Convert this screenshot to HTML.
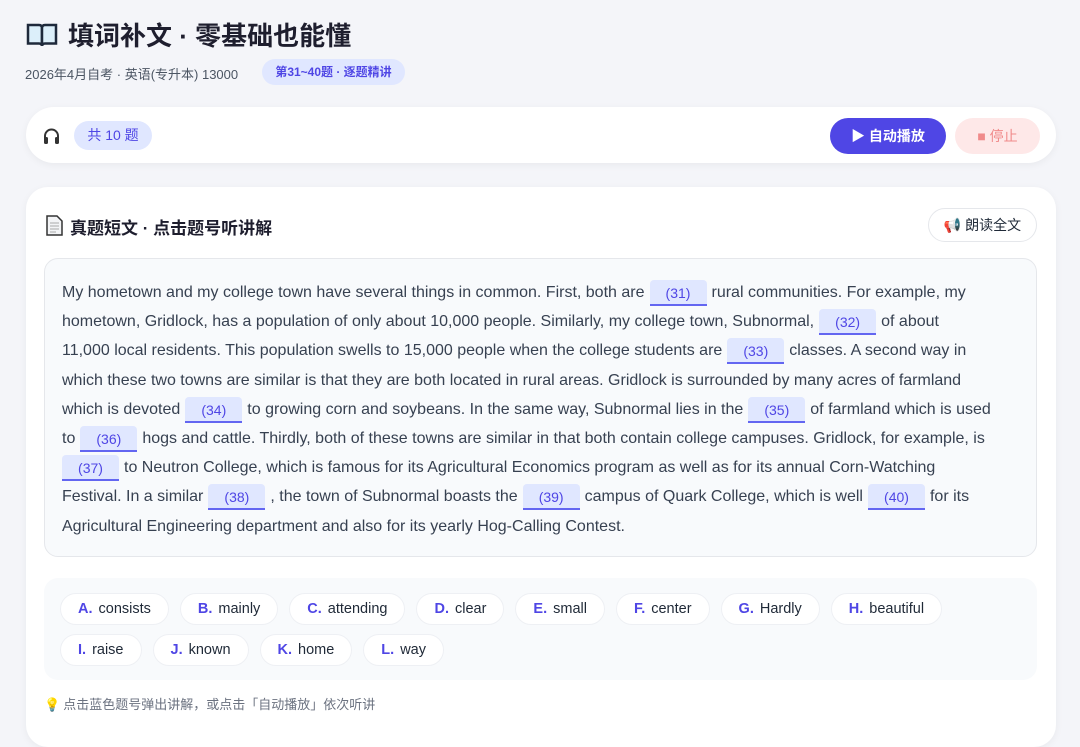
<!DOCTYPE html>
<html><head><meta charset="utf-8"><style>
*{box-sizing:border-box;margin:0;padding:0}
body{width:1080px;height:719px;overflow:hidden;background:#f4f5f9;font-family:"Liberation Sans","Noto Sans CJK SC",sans-serif;color:#1f2937;position:relative}
.abs{position:absolute}
h1{position:absolute;left:68px;top:16px;font-size:26px;font-weight:700;color:#1e1e2e;letter-spacing:0}
.sub{left:25px;top:64px;font-size:13px;color:#4b5563}
.pill{left:262px;top:59px;width:143px;height:26px;border-radius:13px;background:#e0e7ff;color:#4f46e5;font-size:12px;font-weight:700;text-align:center;line-height:26px}
.card{background:#fff;border-radius:28px;box-shadow:0 2px 8px rgba(0,0,0,0.05)}
.cnt{left:74px;top:121px;width:78px;height:29px;border-radius:15px;background:#e0e7ff;color:#4f46e5;font-size:14px;text-align:center;line-height:29px}
.play{left:830px;top:118px;width:116px;height:36px;border-radius:18px;background:#4f46e5;color:#fff;font-size:14px;font-weight:700;text-align:center;line-height:36px}
.stop{left:955px;top:118px;width:85px;height:36px;border-radius:18px;background:#fee8e8;color:#f08a8a;font-size:14px;text-align:center;line-height:36px}
.h2{left:70px;top:214px;font-size:17px;font-weight:700;color:#1e1e2e}
.read{left:928px;top:208px;width:109px;height:34px;border-radius:17px;border:1px solid #e5e7eb;background:#fff;font-size:14px;text-align:center;line-height:32px;color:#1f2937}
.pass{left:44px;top:258px;width:993px;height:299px;background:#f8fafc;border:1px solid #e5e7eb;border-radius:14px;padding:19px 0 0 17px}
.ln{height:29.2px;line-height:29px;font-size:16px;color:#374151;white-space:nowrap}
.b{display:inline-block;width:57px;height:26px;line-height:26px;margin:0 5px;background:#e0e7ff;border-bottom:2px solid #6366f1;color:#4f46e5;font-size:14px;text-align:center;vertical-align:middle;border-radius:4px 4px 0 0}
.opts{left:44px;top:578px;width:993px;height:102px;background:#f8fafc;border-radius:14px;padding:15px 0 0 16px}
.row{height:41px;white-space:nowrap}
.ch{display:inline-block;height:32px;line-height:30px;padding:0 17px;border:1px solid #eef0f4;background:#fff;border-radius:16px;font-size:14.5px;margin-right:11px;color:#1f2937}
.ch b{color:#4f46e5;margin-right:6px}
.hint{left:44px;top:694px;font-size:13px;color:#6b7280}
</style></head><body>
<svg class="abs" style="left:26px;top:22px" width="32" height="26" viewBox="0 0 32 26"><path d="M2 3h11c2 0 3 1 3 3v18c0-1.5-1-2.5-3-2.5H2z" fill="#dceffa" stroke="#1e293b" stroke-width="2.5"/><path d="M30 3H19c-2 0-3 1-3 3v18c0-1.5 1-2.5 3-2.5h11z" fill="#dceffa" stroke="#1e293b" stroke-width="2.5"/></svg>
<h1>填词补文 · 零基础也能懂</h1>
<div class="abs sub">2026年4月自考 · 英语(专升本) 13000</div>
<div class="abs pill">第31~40题 · 逐题精讲</div>
<div class="abs card" style="left:26px;top:107px;width:1030px;height:56px"></div>
<svg class="abs" style="left:42px;top:127px" width="19" height="18" viewBox="0 0 19 18"><path d="M3 12V9a6.5 6.5 0 0 1 13 0v3" fill="none" stroke="#333" stroke-width="2"/><rect x="2" y="10" width="4" height="7" rx="1.5" fill="#333"/><rect x="13" y="10" width="4" height="7" rx="1.5" fill="#333"/></svg>
<div class="abs cnt">共 10 题</div>
<div class="abs play">▶ 自动播放</div>
<div class="abs stop">■ 停止</div>
<div class="abs card" style="left:26px;top:187px;width:1030px;height:560px;border-radius:22px"></div>
<svg class="abs" style="left:46px;top:215px" width="17" height="21" viewBox="0 0 17 21"><path d="M1 1h10l5 5v14H1z" fill="#f3f4f6" stroke="#333" stroke-width="1.5"/><path d="M4 8h9M4 11h9M4 14h9M4 17h6" stroke="#aaa"/></svg>
<div class="abs h2">真题短文 · 点击题号听讲解</div>
<div class="abs read"><span style="color:#c0392b">📢</span> 朗读全文</div>
<div class="abs pass">
<div class="ln">My hometown and my college town have several things in common. First, both are<span class="b">(31)</span>rural communities. For example, my</div>
<div class="ln">hometown, Gridlock, has a population of only about 10,000 people. Similarly, my college town, Subnormal,<span class="b">(32)</span>of about</div>
<div class="ln">11,000 local residents. This population swells to 15,000 people when the college students are<span class="b">(33)</span>classes. A second way in</div>
<div class="ln">which these two towns are similar is that they are both located in rural areas. Gridlock is surrounded by many acres of farmland</div>
<div class="ln">which is devoted<span class="b">(34)</span>to growing corn and soybeans. In the same way, Subnormal lies in the<span class="b">(35)</span>of farmland which is used</div>
<div class="ln">to<span class="b">(36)</span>hogs and cattle. Thirdly, both of these towns are similar in that both contain college campuses. Gridlock, for example, is</div>
<div class="ln"><span class="b" style="margin-left:0">(37)</span>to Neutron College, which is famous for its Agricultural Economics program as well as for its annual Corn-Watching</div>
<div class="ln">Festival. In a similar<span class="b">(38)</span>, the town of Subnormal boasts the<span class="b">(39)</span>campus of Quark College, which is well<span class="b">(40)</span>for its</div>
<div class="ln">Agricultural Engineering department and also for its yearly Hog-Calling Contest.</div>
</div>
<div class="abs opts">
<div class="row"><span class="ch"><b>A.</b>consists</span><span class="ch"><b>B.</b>mainly</span><span class="ch"><b>C.</b>attending</span><span class="ch"><b>D.</b>clear</span><span class="ch"><b>E.</b>small</span><span class="ch"><b>F.</b>center</span><span class="ch"><b>G.</b>Hardly</span><span class="ch"><b>H.</b>beautiful</span></div>
<div class="row"><span class="ch"><b>I.</b>raise</span><span class="ch"><b>J.</b>known</span><span class="ch"><b>K.</b>home</span><span class="ch"><b>L.</b>way</span></div>
</div>
<div class="abs hint"><span style="color:#eab308;margin-right:3px">💡</span>点击蓝色题号弹出讲解，或点击「自动播放」依次听讲</div>
</body></html>
